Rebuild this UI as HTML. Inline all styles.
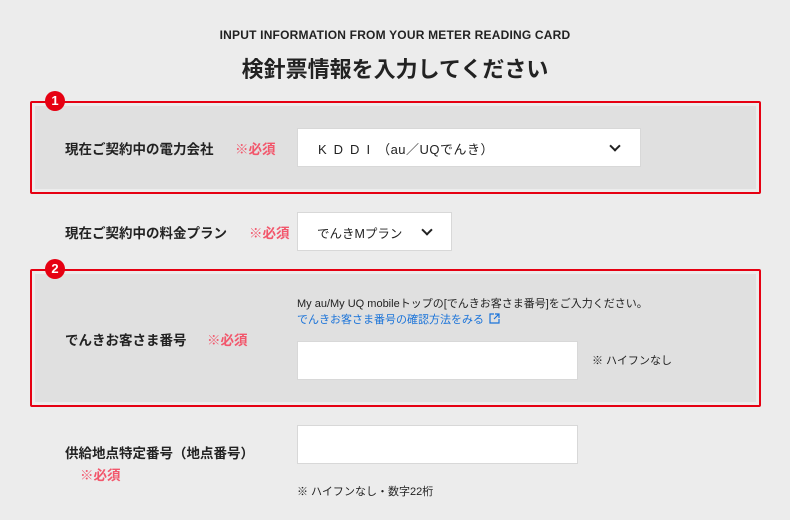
<!DOCTYPE html>
<html><head><meta charset="utf-8"><style>
*{margin:0;padding:0;box-sizing:border-box}
body{width:790px;height:520px;background:#ececec;font-family:"Liberation Sans","Noto Sans CJK JP",sans-serif;color:#222;position:relative;overflow:hidden}
.a{position:absolute;white-space:nowrap}
.frame{position:absolute;border:2px solid #e60012;border-radius:2px}
.gray{position:absolute;background:#e0e0e0}
.badge{position:absolute;width:20px;height:20px;border-radius:50%;background:#e60012;color:#fff;font-weight:bold;font-size:13px;text-align:center;line-height:20px}
.lbl{font-size:13.5px;font-weight:bold}
.req{font-size:13.5px;font-weight:bold;color:#f2566b}
.box{position:absolute;background:#fff;border:1px solid #d8d8d8}
.chev{position:absolute;width:8px;height:8px;border-right:2px solid #222;border-bottom:2px solid #222;transform:rotate(45deg)}
</style></head><body>
<div class="a" style="left:0;width:790px;top:28px;text-align:center;font-size:12px;font-weight:bold;letter-spacing:.2px">INPUT INFORMATION FROM YOUR METER READING CARD</div>
<div class="a" style="left:0;width:790px;top:52px;text-align:center;font-size:22px;font-weight:bold">検針票情報を入力してください</div>

<div class="frame" style="left:30px;top:101px;width:731px;height:93px"></div>
<div class="gray" style="left:35px;top:106px;width:721px;height:83px"></div>
<div class="badge" style="left:45px;top:91px">1</div>
<div class="a lbl" style="left:65px;top:138px">現在ご契約中の電力会社</div>
<div class="a req" style="left:235px;top:138px">※必須</div>
<div class="box" style="left:297px;top:128px;width:344px;height:39px"></div>
<div class="a" style="left:318px;top:139px;font-size:13px;letter-spacing:0.5px"><span style="letter-spacing:7px">KDDI</span>（au／UQでんき）</div>
<div class="chev" style="left:611px;top:142px"></div>

<div class="a lbl" style="left:65px;top:222px">現在ご契約中の料金プラン</div>
<div class="a req" style="left:249px;top:222px">※必須</div>
<div class="box" style="left:297px;top:212px;width:155px;height:39px"></div>
<div class="a" style="left:317px;top:223px;font-size:12.5px">でんきMプラン</div>
<div class="chev" style="left:423px;top:226px"></div>

<div class="frame" style="left:30px;top:269px;width:731px;height:138px"></div>
<div class="gray" style="left:35px;top:274px;width:721px;height:128px"></div>
<div class="badge" style="left:45px;top:259px">2</div>
<div class="a lbl" style="left:65px;top:329px">でんきお客さま番号</div>
<div class="a req" style="left:207px;top:329px">※必須</div>
<div class="a" style="left:297px;top:295px;font-size:11px">My au/My UQ mobileトップの[でんきお客さま番号]をご入力ください。</div>
<div class="a" style="left:297px;top:311px;font-size:11px;color:#1a73d9">でんきお客さま番号の確認方法をみる <svg width="11" height="11" viewBox="0 0 11 11" style="vertical-align:-1px;margin-left:2px"><path d="M5 1H1v9h9V6M6 1h4v4M10 1L5 6" fill="none" stroke="#1a73d9" stroke-width="1.2"/></svg></div>
<div class="box" style="left:297px;top:341px;width:281px;height:39px"></div>
<div class="a" style="left:592px;top:352px;font-size:11px">※ ハイフンなし</div>

<div class="a lbl" style="left:65px;top:442px">供給地点特定番号（地点番号）</div>
<div class="a req" style="left:80px;top:464px">※必須</div>
<div class="box" style="left:297px;top:425px;width:281px;height:39px"></div>
<div class="a" style="left:297px;top:483px;font-size:11px">※ ハイフンなし・数字22桁</div>
</body></html>
